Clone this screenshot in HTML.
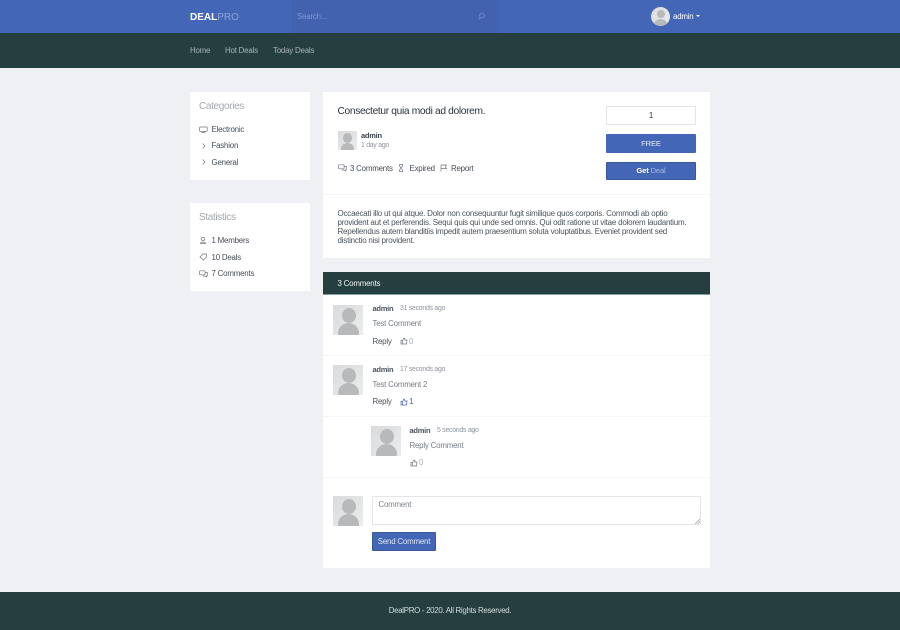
<!DOCTYPE html>
<html><head><meta charset="utf-8"><style>
*{box-sizing:border-box}
html,body{margin:0;padding:0;background:#eef0f3;width:900px;height:630px;overflow:hidden}
body{position:relative;font-family:"Liberation Sans",sans-serif;font-size:7.900px;letter-spacing:-.2px;color:#454e58}
#w{position:absolute;left:0;top:0;width:900px;height:630px;filter:blur(.3px)}
.a,.t{position:absolute}
.t{white-space:nowrap;line-height:10px}
.card{position:absolute;background:#fff}
svg{position:absolute;fill:none;stroke:#6d757e;stroke-width:.7}
.g{color:#8f959d}
.av{position:absolute;overflow:hidden;background:linear-gradient(135deg,#d9dadc,#eceded)}
.av i{position:absolute;background:#b8b9bb;border-radius:50%;display:block}
.b{font-weight:bold;font-size:7.500px;letter-spacing:-.25px;color:#4b535c}
.s{font-size:6.900px;letter-spacing:-.25px}
.h{font-size:10px;letter-spacing:-.34px;line-height:12px;color:#a2a7ad}
</style></head><body><div id="w">
<div class="a" style="left:0;top:0;width:900px;height:33px;background:#4466b6"></div>
<div class="a" style="left:292px;top:0;width:206px;height:33px;background:#4262b0"></div>
<div class="a" style="left:0;top:33px;width:900px;height:35px;background:#253f41"></div>
<div class="t" style="left:190px;top:11.500px;font-size:10px;letter-spacing:0;color:#fff;line-height:12px"><b>DEAL</b><span style="color:#8ea3d6">PRO</span></div>
<div class="t" style="left:297px;top:12px;color:#7f97cf">Search...</div>
<svg style="left:477px;top:12px" width="9" height="9" viewBox="0 0 9 9"><circle cx="5" cy="3.600" r="2.400" stroke="#7f97cf"/><path d="M3.300 5.400 1.600 7.600" stroke="#7f97cf"/></svg>
<div class="av" style="left:651px;top:7px;width:19px;height:19px;border-radius:50%"><i style="left:5.500px;top:3px;width:8px;height:8px"></i><i style="left:3px;top:11.500px;width:13px;height:10px"></i></div>
<div class="t" style="left:673px;top:12px;color:#fff">admin</div>
<div class="a" style="left:695.500px;top:15px;border:2.500px solid transparent;border-top:2.500px solid #fff;border-bottom:0"></div>
<div class="t" style="left:190px;top:45.500px;color:#a9b2b5">Home</div>
<div class="t" style="left:225px;top:45.500px;color:#a9b2b5">Hot Deals</div>
<div class="t" style="left:273px;top:45.500px;color:#a9b2b5">Today Deals</div>

<div class="card" style="left:190px;top:92px;width:120px;height:88px"></div>
<div class="t h" style="left:199px;top:101px">Categories</div>
<svg style="left:199px;top:126px" width="9" height="8" viewBox="0 0 9 8"><rect x=".6" y="1" width="7.600" height="4.400" rx=".8"/><path d="M2.500 6.600h4"/></svg>
<div class="t" style="left:211.500px;top:125px">Electronic</div>
<svg style="left:200px;top:142px" width="7" height="8" viewBox="0 0 7 8"><path d="M2.500 1.500 5 4 2.500 6.500"/></svg>
<div class="t" style="left:211.500px;top:141px">Fashion</div>
<svg style="left:200px;top:158px" width="7" height="8" viewBox="0 0 7 8"><path d="M2.500 1.500 5 4 2.500 6.500"/></svg>
<div class="t" style="left:211.500px;top:157.500px">General</div>

<div class="card" style="left:190px;top:203px;width:120px;height:88px"></div>
<div class="t h" style="left:199px;top:212px">Statistics</div>
<svg style="left:199px;top:236px" width="8" height="9" viewBox="0 0 8 9"><circle cx="4" cy="3" r="1.700"/><path d="M1.500 7.500c0-2 5-2 5 0z"/></svg>
<div class="t" style="left:211.500px;top:236px">1 Members</div>
<svg style="left:199px;top:253px" width="9" height="8" viewBox="0 0 9 8"><path d="M1 4l3-3h3.500v3l-3 3z"/></svg>
<div class="t" style="left:211.500px;top:252.500px">10 Deals</div>
<svg style="left:199px;top:270px" width="9" height="8" viewBox="0 0 9 8"><rect x=".6" y=".8" width="5.500" height="4" rx=".7"/><path d="M6.500 2.500h1.800v3.500H7.500v1L6 6H3.500"/></svg>
<div class="t" style="left:211.500px;top:269px">7 Comments</div>

<div class="card" style="left:323px;top:92px;width:387px;height:166px"></div>
<div class="a" style="left:323px;top:194px;width:387px;height:1px;background:#f3f4f6"></div>
<div class="t" style="left:337.500px;top:105.500px;font-size:10.200px;letter-spacing:-.33px;line-height:12px;color:#2b333b">Consectetur quia modi ad dolorem.</div>
<div class="av" style="left:337.500px;top:131px;width:19px;height:19px"><i style="left:5.500px;top:2px;width:9px;height:9.500px"></i><i style="left:3px;top:11.500px;width:13px;height:12px"></i></div>
<div class="t b" style="left:361px;top:130.500px;color:#3b4450">admin</div>
<div class="t g s" style="left:361px;top:141px">1 day ago</div>
<svg style="left:338px;top:164px" width="9" height="8" viewBox="0 0 9 8"><rect x=".6" y=".8" width="5.500" height="4" rx=".7"/><path d="M6.500 2.500h1.800v3.500H7.500v1L6 6H3.500"/></svg>
<div class="t" style="left:350px;top:163.500px">3 Comments</div>
<svg style="left:398px;top:164px" width="6" height="8" viewBox="0 0 6 8"><path d="M1 .6h4M1 7.400h4M1.500 .6v1.500l3 3.800v1.500M4.500 .6v1.500l-3 3.800v1.500"/></svg>
<div class="t" style="left:409.500px;top:163.500px">Expired</div>
<svg style="left:440px;top:164px" width="8" height="8" viewBox="0 0 8 8"><path d="M1 7.500V1h5.500L5.300 2.700 6.500 4.500H1"/></svg>
<div class="t" style="left:451px;top:163.500px">Report</div>

<div class="a" style="left:606px;top:106px;width:90px;height:19px;border:1px solid #e3e5e8;background:#fff;text-align:center;line-height:17px;color:#2b333b">1</div>
<div class="a" style="left:606px;top:134px;width:90px;height:19px;background:#4466b6;border-radius:1px;text-align:center;line-height:19px;color:#e8edf8;font-size:7.600px;letter-spacing:-.15px">FREE</div>
<div class="a" style="left:606px;top:162px;width:90px;height:18px;background:#4466b6;border:1px solid #3a5799;border-radius:1px;text-align:center;line-height:16px;color:#a9bae3;font-size:7.600px;letter-spacing:-.15px"><b style="color:#fff">Get</b> Deal</div>

<div class="a" style="left:337.500px;top:208.500px;width:360px;line-height:9.100px;font-size:8px;letter-spacing:-.22px;color:#4b535c;white-space:nowrap">Occaecati illo ut qui atque. Dolor non consequuntur fugit similique quos corporis. Commodi ab optio<br>provident aut et perferendis. Sequi quis qui unde sed omnis. Qui odit ratione ut vitae dolorem laudantium.<br>Repellendus autem blanditiis impedit autem praesentium soluta voluptatibus. Eveniet provident sed<br>distinctio nisi provident.</div>

<div class="card" style="left:323px;top:272px;width:387px;height:296px"></div>
<div class="a" style="left:323px;top:272px;width:387px;height:23px;background:#253f41;border-bottom:1px solid #7fa19f"></div>
<div class="t" style="left:337.500px;top:278.500px;color:#f0f3f3">3 Comments</div>

<div class="av" style="left:333px;top:305px;width:30px;height:30px"><i style="left:9px;top:3px;width:14px;height:15px"></i><i style="left:5px;top:18px;width:21px;height:20px"></i></div>
<div class="t b" style="left:372.500px;top:303.500px">admin</div>
<div class="t g s" style="left:400px;top:304px">31 seconds ago</div>
<div class="t" style="left:372.500px;top:319px;color:#767d85">Test Comment</div>
<div class="t" style="left:372.500px;top:336.500px;color:#4b535c">Reply</div>
<svg style="left:400px;top:337px" width="8" height="8" viewBox="0 0 8 8"><path d="M1 3.500h1.500V7H1zM2.500 3.500 4 1c1 0 1 1 .7 2H7l-.5 4H2.500"/></svg>
<div class="t" style="left:409px;top:336.500px;color:#a8adb3">0</div>
<div class="a" style="left:323px;top:355px;width:387px;height:1px;background:#f5f6f7"></div>

<div class="av" style="left:333px;top:365px;width:30px;height:30px"><i style="left:9px;top:3px;width:14px;height:15px"></i><i style="left:5px;top:18px;width:21px;height:20px"></i></div>
<div class="t b" style="left:372.500px;top:364.500px">admin</div>
<div class="t g s" style="left:400px;top:365px">17 seconds ago</div>
<div class="t" style="left:372.500px;top:379.500px;color:#767d85">Test Comment 2</div>
<div class="t" style="left:372.500px;top:397px;color:#4b535c">Reply</div>
<svg style="left:400px;top:398px;stroke:#4466b6" width="8" height="8" viewBox="0 0 8 8"><path d="M1 3.500h1.500V7H1zM2.500 3.500 4 1c1 0 1 1 .7 2H7l-.5 4H2.500"/></svg>
<div class="t" style="left:409px;top:397px;color:#4466b6">1</div>
<div class="a" style="left:323px;top:416px;width:387px;height:1px;background:#f5f6f7"></div>

<div class="av" style="left:370.500px;top:426px;width:30px;height:30px"><i style="left:9px;top:3px;width:14px;height:15px"></i><i style="left:5px;top:18px;width:21px;height:20px"></i></div>
<div class="t b" style="left:409.500px;top:425.500px">admin</div>
<div class="t g s" style="left:437px;top:426px">5 seconds ago</div>
<div class="t" style="left:409.500px;top:440.500px;color:#767d85">Reply Comment</div>
<svg style="left:410px;top:459px" width="8" height="8" viewBox="0 0 8 8"><path d="M1 3.500h1.500V7H1zM2.500 3.500 4 1c1 0 1 1 .7 2H7l-.5 4H2.500"/></svg>
<div class="t" style="left:419px;top:458px;color:#a8adb3">0</div>
<div class="a" style="left:323px;top:477px;width:387px;height:1px;background:#f5f6f7"></div>

<div class="av" style="left:333px;top:496px;width:30px;height:30px"><i style="left:9px;top:3px;width:14px;height:15px"></i><i style="left:5px;top:18px;width:21px;height:20px"></i></div>
<div class="a" style="left:372px;top:496px;width:329px;height:29px;border:1px solid #e3e5e8;background:#fff"></div>
<svg style="left:695px;top:519px;stroke:#999" width="5" height="5" viewBox="0 0 5 5"><path d="M0 5 5 0M2.500 5 5 2.500"/></svg>
<div class="t" style="left:378.500px;top:499.500px;color:#7f868d">Comment</div>
<div class="a" style="left:372px;top:532px;width:64px;height:19px;background:#4466b6;border:1px solid #3a5799;border-radius:1px;text-align:center;line-height:17px;color:#dfe6f6">Send Comment</div>

<div class="a" style="left:0;top:592px;width:900px;height:38px;background:#253f41"></div>
<div class="a" style="left:0;top:605.500px;width:900px;text-align:center;line-height:10px;color:#d5dbdb;letter-spacing:-.3px">DealPRO - 2020. All Rights Reserved.</div>
</div></body></html>
